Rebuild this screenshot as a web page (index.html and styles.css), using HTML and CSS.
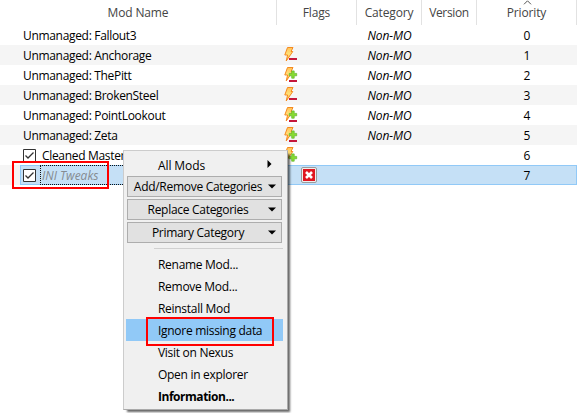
FILE: index.html
```
<!DOCTYPE html>
<html lang="en">
<head>
<meta charset="utf-8">
<title>Mod list</title>
<link rel="stylesheet" href="styles.css">
</head>
<body>
<svg width="0" height="0" class="defs">
  <defs>
    <linearGradient id="gold" x1="0" y1="0" x2="0" y2="1"><stop offset="0" stop-color="#ffc35a"/><stop offset=".5" stop-color="#ffe27a"/><stop offset="1" stop-color="#ffb02e"/></linearGradient>
    <symbol id="bolt" viewBox="0 0 14 16"><path d="M3.5 1.5H9L7 5.5H8.8L2.2 15L3.6 9H.8Z" fill="url(#gold)" stroke="#f58a20" stroke-width="1"/></symbol>
    <symbol id="minus" viewBox="0 0 14 16"><path d="M5 12h8v2H5z" fill="#c4173c"/></symbol>
    <symbol id="plus" viewBox="0 0 14 16"><path d="M7.7 4.9h2.5v2.5h2.5v2.4h-2.5v2.4H7.7V9.8H5.2V7.4h2.5z" fill="#86dc30" stroke="#61b52d" stroke-width=".7"/></symbol>
    <symbol id="check" viewBox="0 0 13 13"><path d="M.5 .5h12v12H.5z" fill="#fff" stroke="#333"/><path d="M2.5 6.5L5 9L10.5 3.5" fill="none" stroke="#333" stroke-width="1.3"/></symbol>
  </defs>
</svg>
<main class="list">
  <div class="row head">
    <span class="name">Mod Name</span><span class="flags">Flags</span><span class="cat">Category</span><span class="ver">Version</span><span class="prio"><svg class="sort" width="9" height="5" viewBox="0 0 9 5"><path d="M1 4.3L4.5 .8L8 4.3" fill="none" stroke="#555"/></svg>Priority</span>
  </div>
  <div class="row"><span class="name">Unmanaged: Fallout3</span><span class="flags"></span><span class="cat">Non-MO</span><span class="ver"></span><span class="prio">0</span></div>
  <div class="row alt"><span class="name">Unmanaged: Anchorage</span><span class="flags"><svg class="flag"><use href="#bolt"/><use href="#minus"/></svg></span><span class="cat">Non-MO</span><span class="ver"></span><span class="prio">1</span></div>
  <div class="row"><span class="name">Unmanaged: ThePitt</span><span class="flags"><svg class="flag"><use href="#bolt"/><use href="#minus" y="2"/><use href="#plus"/></svg></span><span class="cat">Non-MO</span><span class="ver"></span><span class="prio">2</span></div>
  <div class="row alt"><span class="name">Unmanaged: BrokenSteel</span><span class="flags"><svg class="flag"><use href="#bolt"/><use href="#minus"/></svg></span><span class="cat">Non-MO</span><span class="ver"></span><span class="prio">3</span></div>
  <div class="row"><span class="name">Unmanaged: PointLookout</span><span class="flags"><svg class="flag"><use href="#bolt"/><use href="#minus" y="2"/><use href="#plus"/></svg></span><span class="cat">Non-MO</span><span class="ver"></span><span class="prio">4</span></div>
  <div class="row alt"><span class="name">Unmanaged: Zeta</span><span class="flags"><svg class="flag"><use href="#bolt"/><use href="#minus" y="2"/><use href="#plus"/></svg></span><span class="cat">Non-MO</span><span class="ver"></span><span class="prio">5</span></div>
  <div class="row"><span class="name"><svg class="check"><use href="#check"/></svg>Cleaned Masters</span><span class="flags"><svg class="flag"><use href="#bolt"/><use href="#plus" y="3"/></svg></span><span class="cat"></span><span class="ver"></span><span class="prio">6</span></div>
  <div class="row alt selected"><span class="name"><svg class="check"><use href="#check"/></svg><span class="focus">INI Tweaks</span></span><span class="flags"><svg class="error" viewBox="0 0 16 16"><rect x=".5" y=".5" width="15" height="15" rx="1.5" fill="#eee" stroke="#9b9b9b"/><path d="M2 2h12v12H2z" fill="#df1620"/><path d="M5 5L11 11M11 5L5 11" stroke="#fff" stroke-width="2.6"/></svg></span><span class="cat"></span><span class="ver"></span><span class="prio">7</span></div>
</main>
<nav class="menu">
  <div class="item first">All Mods<svg class="side" width="5" height="8" viewBox="0 0 5 8"><path d="M.5 0L4.5 4L.5 8z"/></svg></div>
  <div class="button">Add/Remove Categories<svg width="8" height="5" viewBox="0 0 8 5"><path d="M0 .5h8L4 4.5z"/></svg></div>
  <div class="button">Replace Categories<svg width="8" height="5" viewBox="0 0 8 5"><path d="M0 .5h8L4 4.5z"/></svg></div>
  <div class="button">Primary Category<svg width="8" height="5" viewBox="0 0 8 5"><path d="M0 .5h8L4 4.5z"/></svg></div>
  <hr>
  <div class="item">Rename Mod...</div>
  <div class="item">Remove Mod...</div>
  <div class="item">Reinstall Mod</div>
  <div class="item active">Ignore missing data</div>
  <div class="item">Visit on Nexus</div>
  <div class="item">Open in explorer</div>
  <div class="item bold">Information...</div>
</nav>
<div class="mark mark-row"></div>
<div class="mark mark-item"></div>
</body>
</html>
```
FILE: styles.css
```
* { box-sizing: border-box; }
body { margin: 0; width: 577px; height: 413px; overflow: hidden; position: relative; background: #fff; color: #000; font: 12px/20px "Open Sans", "Noto Sans", sans-serif; letter-spacing: -0.1px; }
.defs { position: absolute; }
.row { display: grid; grid-template-columns: 277px 80px 65px 55px 100px; height: 20px; white-space: nowrap; }
.row > span { display: flex; align-items: flex-start; height: 20px; line-height: 22px; }
.row > .name { padding-left: 23px; letter-spacing: -0.32px; }
.row > .cat, .row > .ver, .row > .prio { justify-content: center; }
.row > .cat { font-style: italic; }
.row > .flags { padding-left: 7px; }
.alt { background: #f5f5f5; }
.head { height: 25px; color: #444; }
.row.head > span { align-items: center; height: 25px; line-height: 20px; justify-content: center; border-right: 1px solid #e2e2e2; padding: 1px 0 0; font-style: normal; letter-spacing: -0.15px; position: relative; }
.row.head > .ver { letter-spacing: -0.35px; }
.sort { position: absolute; top: 0; left: 46px; }
.flag { width: 14px; height: 16px; margin-top: 1px; }
.check { width: 13px; height: 13px; flex: none; margin: 4px 6px 0 0; }
.row.selected { background: linear-gradient(to right, #f5f5f5 20px, #c5e0f6 20px); position: relative; }
.selected::before { content: ""; position: absolute; inset: 0 0 0 20px; border: 1px solid #91c9f7; }
.row.selected > .name { letter-spacing: 0; }
.selected .check { margin: 4px 4px 0 0; position: relative; }
.focus { flex: 1; height: 20px; line-height: 20px; border: 1px dotted #111; padding-left: 1px; font-style: italic; color: #858b91; position: relative; }
.row .error { width: 16px; height: 16px; margin: 2px 0 0 17px; }
.menu { position: absolute; left: 123px; top: 150px; width: 165px; height: 260px; background: #f0f0f0; border: 1px solid #ccc; border-right-color: #aaa; border-bottom-color: #aaa; box-shadow: 3px 3px 2px -1px rgba(0,0,0,.6); padding: 3px 4px 2px 2px; white-space: nowrap; letter-spacing: -0.29px; }
.item { height: 22px; line-height: 23px; padding-left: 32px; position: relative; }
.first { letter-spacing: -0.1px; }
.side { position: absolute; right: 11px; top: 6px; }
.button { height: 21px; margin: 0 1px 2px; border: 1px solid #adadad; background: #e1e1e1; display: flex; align-items: center; justify-content: center; padding-right: 13px; position: relative; line-height: 19px; }
.button svg { position: absolute; right: 5px; top: 7px; }
.menu hr { border: 0; height: 1px; background: #d0d0d0; margin: 5px 0 4px 28px; }
.active { background: #91c9f7; }
.bold { font-weight: 700; letter-spacing: -0.47px; }
.mark { position: absolute; border: 2px solid #f00; }
.mark-row { left: 12px; top: 161px; width: 97px; height: 28px; }
.mark-item { left: 146px; top: 317px; width: 128px; height: 29px; }
```
